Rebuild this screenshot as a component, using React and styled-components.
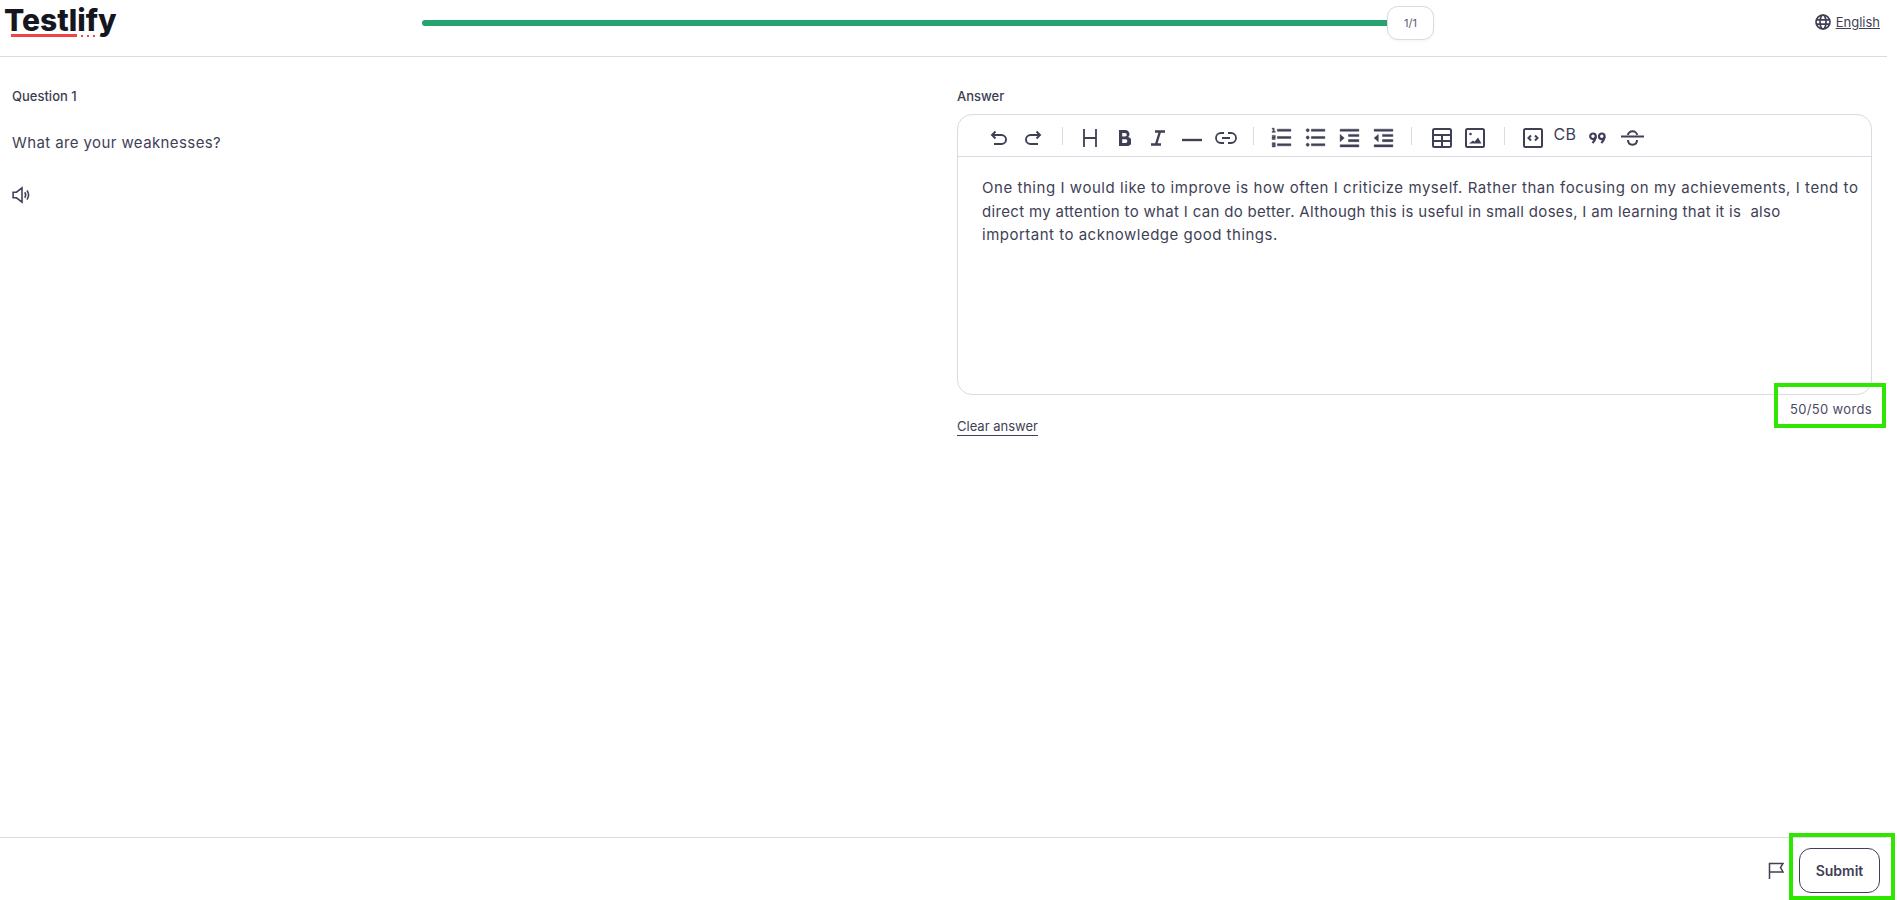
import React from 'react';
import styled, { createGlobalStyle } from 'styled-components';
import {
  RiListOrdered,
  RiListUnordered,
  RiIndentIncrease,
  RiIndentDecrease,
} from 'react-icons/ri';

const ink = '#3f3f56';
const line = '#d9dae3';

const GlobalStyle = createGlobalStyle`
  html, body { margin: 0; padding: 0; background: #fff; }
  body { font-family: Inter, "Open Sans", sans-serif; color: ${ink}; overflow: hidden; }
`;

const Page = styled.div`
  height: 900px;
  display: flex;
  flex-direction: column;
  padding-right: 10px;
  box-sizing: border-box;
`;

const Header = styled.header`
  height: 57px;
  flex: none;
  box-sizing: border-box;
  border-bottom: 1px solid ${line};
  display: flex;
  align-items: flex-start;
`;

const Logo = styled.div`
  width: 422px;
  flex: none;
  padding: 0 0 0 4px;
  box-sizing: border-box;
  position: relative;
  font-size: 30px;
  line-height: 40px;
  font-weight: 800;
  letter-spacing: 0px;
  color: #14171f;
`;

const LogoLine = styled.span`
  position: absolute;
  left: 11px;
  top: 34px;
  width: 66px;
  height: 3px;
  background: #f0444b;
`;

const LogoDots = styled.span`
  position: absolute;
  left: 81px;
  top: 35px;
  display: flex;
  gap: 4px;
  i {
    width: 2px;
    height: 2px;
    background: #f0444b;
    display: block;
  }
`;

const ProgressWrap = styled.div`
  width: 1012px;
  flex: none;
  display: flex;
  align-items: center;
  height: 34px;
  margin-top: 6px;
`;

const ProgressBar = styled.div`
  width: 965px;
  height: 6px;
  background: #27a36f;
  border-radius: 3px 0 0 3px;
`;

const Count = styled.div`
  width: 47px;
  height: 34px;
  box-sizing: border-box;
  border: 1px solid ${line};
  border-radius: 11px;
  background: #fff;
  font-size: 11px;
  color: #5a5a72;
  display: flex;
  align-items: center;
  justify-content: center;
  box-shadow: 0 1px 3px rgba(60, 60, 90, 0.06);
`;

const Language = styled.div`
  margin-left: auto;
  margin-top: 14px;
  margin-right: 7px;
  display: flex;
  align-items: center;
  gap: 5px;
  font-size: 13px;
  a { color: ${ink}; text-decoration: underline; }
`;

const Main = styled.main`
  flex: 1;
  display: grid;
  grid-template-columns: 957px 915px;
  align-content: start;
`;

const QuestionCol = styled.section`
  padding: 30px 0 0 12px;
`;

const Label = styled.div`
  font-size: 13px;
  line-height: 18px;
  font-weight: 450;
  color: #3d3d52;
`;

const QuestionText = styled.p`
  margin: 27px 0 0;
  font-size: 15px;
  line-height: 22px;
  letter-spacing: 0.4px;
`;

const Speaker = styled.svg`
  display: block;
  margin-top: 31px;
  width: 20px;
  height: 20px;
`;

const AnswerCol = styled.section`
  padding-top: 30px;
  position: relative;
`;

const Editor = styled.div`
  margin-top: 9px;
  height: 281px;
  box-sizing: border-box;
  border: 1px solid ${line};
  border-radius: 15px;
`;

const Toolbar = styled.div`
  height: 42px;
  box-sizing: border-box;
  border-bottom: 1px solid ${line};
  display: flex;
  align-items: center;
  padding: 4px 0 0 30px;
`;

const Tool = styled.span`
  width: 22px;
  height: 22px;
  margin-right: ${(p) => p.$gap ?? 12}px;
  display: flex;
  align-items: center;
  justify-content: center;
  font-size: 25px;
  color: ${ink};
  flex: none;
  svg { flex: none; }
`;

const HeavyTool = styled(Tool)`
  svg { stroke: currentColor; stroke-width: 0.45; }
`;

const ToolText = styled.span`
  font-size: 16px;
  letter-spacing: 0.4px;
  color: ${ink};
  width: 26px;
  margin-right: 8px;
  margin-top: -7px;
  text-align: center;
  flex: none;
`;

const Divider = styled.span`
  width: 1px;
  height: 18px;
  background: ${line};
  flex: none;
  margin-top: -3px;
  margin-right: ${(p) => p.$gap ?? 17}px;
`;

const Body = styled.div`
  padding: 19px 10px 0 24px;
  font-size: 15px;
  line-height: 23.5px;
  white-space: nowrap;
`;

const BodyLine = styled.div`
  letter-spacing: ${(p) => p.$spacing}px;
`;

const WordCount = styled.div`
  margin-top: 5px;
  text-align: right;
  font-size: 13px;
  letter-spacing: 0.35px;
  line-height: 18px;
  color: #4a4a62;
`;

const Clear = styled.a`
  display: block;
  width: fit-content;
  margin-top: 0;
  font-size: 13px;
  line-height: 17px;
  color: ${ink};
  border-bottom: 1px solid ${ink};
`;

const Highlight = styled.div`
  position: absolute;
  box-sizing: border-box;
  border: 4px solid #2ee600;
  pointer-events: none;
`;

const WordHighlight = styled(Highlight)`
  left: 817px;
  top: 326px;
  width: 112px;
  height: 45px;
`;

const Footer = styled.footer`
  height: 63px;
  flex: none;
  box-sizing: border-box;
  border-top: 1px solid ${line};
  display: flex;
  align-items: flex-start;
  justify-content: flex-end;
  gap: 15px;
  padding: 10px 7px 0 0;
  position: relative;
`;

const Flag = styled.svg`
  width: 16px;
  height: 17px;
  margin-top: 14px;
`;

const Submit = styled.button`
  width: 81px;
  height: 45px;
  background: #fff;
  border: 1px solid ${ink};
  border-radius: 12px;
  font: 600 14px Inter, sans-serif;
  color: ${ink};
`;

const SubmitHighlight = styled(Highlight)`
  right: -8px;
  top: -5px;
  width: 106px;
  height: 67px;
`;

// toolbar drawings: the editor's icons are heavier than the stock sets
const Draw = ({ w, h, sw = 1.9, fill = 'none', children }) => (
  <svg width={w} height={h} viewBox={`0 0 ${w} ${h}`} fill={fill} stroke={fill === 'none' ? ink : 'none'} strokeWidth={sw}>
    {children}
  </svg>
);

const Undo = () => (
  <Draw w={18} h={16}>
    <path d="M5.500 1.500 2 5l3.500 3.500M2 5h9.500a4.500 4.500 0 0 1 0 9H4" />
  </Draw>
);

const Redo = () => (
  <Draw w={18} h={16}>
    <path d="M12.500 1.500 16 5l-3.500 3.500M16 5H6.500a4.500 4.500 0 0 0 0 9H14" />
  </Draw>
);

const HeadingMark = () => (
  <Draw w={14} h={18} sw={1.8}>
    <path d="M1 0v18M13 0v18M1 9h12" />
  </Draw>
);

const BoldMark = () => (
  <Draw w={13} h={16} fill={ink}>
    <path
      fillRule="evenodd"
      d="M1 0h6.200a4 4 0 0 1 3 6.900A4.400 4.400 0 0 1 7.700 16H1zM4.200 3v3.400h2.900a1.700 1.700 0 0 0 0-3.400zM4.200 9.200V13h3.300a1.900 1.900 0 0 0 0-3.800z"
    />
  </Draw>
);

const ItalicMark = () => (
  <Draw w={16} h={16} sw={2.4}>
    <path d="M5 1.500h10M1 14.500h10M10 1.500 6 14.500" />
  </Draw>
);

const RuleMark = () => (
  <Draw w={20} h={12} sw={2.4}>
    <path d="M0 8h20" />
  </Draw>
);

const LinkMark = () => (
  <Draw w={22} h={12} sw={1.8}>
    <path d="M9 1H6a5 5 0 0 0 0 10h3M13 1h3a5 5 0 0 1 0 10h-3M7 6h8" />
  </Draw>
);

const TableMark = () => (
  <Draw w={20} h={20} sw={2}>
    <rect x="1" y="1" width="18" height="18" rx="1.500" />
    <path d="M1 7h18M1 13h18M10 7v12" />
  </Draw>
);

const ImageMark = () => (
  <Draw w={20} h={20} sw={2}>
    <rect x="1" y="1" width="18" height="18" rx="1.500" />
    <circle cx="5.500" cy="6" r="1.300" fill={ink} stroke="none" />
    <path d="M4 15.500l4-3 1.500 1.200L13 9.500l3.500 6z" fill={ink} stroke="none" />
  </Draw>
);

const CodeMark = () => (
  <Draw w={20} h={20} sw={2}>
    <rect x="1" y="1" width="18" height="18" rx="1.500" />
    <path d="M8 7.500 5.500 10 8 12.500M12 7.500l2.500 2.500-2.500 2.500" />
  </Draw>
);

const QuoteMark = () => (
  <Draw w={17} h={12} sw={2.2}>
    <circle cx="4" cy="4.300" r="2.800" />
    <circle cx="12.800" cy="4.300" r="2.800" />
    <path d="M6.700 5c-.4 2.500-1.600 4.500-3.200 6M15.500 5c-.4 2.500-1.600 4.500-3.200 6" />
  </Draw>
);

const StrikeMark = () => (
  <Draw w={23} h={16} sw={2}>
    <path d="M0 6.500h23M7 5c0-2 2-3.700 4.500-3.700S16 3 16 5M7 10c0 3 2 4.700 4.500 4.700S16 13 16 10" />
  </Draw>
);

export default function App() {
  return (
    <>
      <GlobalStyle />
      <Page>
        <Header>
          <Logo>
            Testlify
            <LogoLine />
            <LogoDots>
              <i />
              <i />
              <i />
            </LogoDots>
          </Logo>
          <ProgressWrap>
            <ProgressBar />
            <Count>1/1</Count>
          </ProgressWrap>
          <Language>
            <svg width="16" height="16" viewBox="0 0 16 16" fill="none" stroke={ink} strokeWidth="1.7">
              <circle cx="8" cy="8" r="7" />
              <ellipse cx="8" cy="8" rx="3" ry="7" />
              <path d="M1 5.800h14M1 10.200h14" />
            </svg>
            <a href="#lang">English</a>
          </Language>
        </Header>
        <Main>
          <QuestionCol>
            <Label>Question 1</Label>
            <QuestionText>What are your weaknesses?</QuestionText>
            <Speaker viewBox="0 0 18 18" fill="none" stroke={ink} strokeWidth="1.4">
              <path d="M1 6.500h3L9 2.500v13l-5-4H1zM11.500 6.500c1 1.500 1 3.500 0 5M13.500 5c1.800 2.500 1.800 5.500 0 8" />
            </Speaker>
          </QuestionCol>
          <AnswerCol>
            <Label>Answer</Label>
            <Editor>
              <Toolbar>
                <Tool><Undo /></Tool>
                <Tool $gap={18}><Redo /></Tool>
                <Divider $gap={16} />
                <Tool><HeadingMark /></Tool>
                <Tool><BoldMark /></Tool>
                <Tool><ItalicMark /></Tool>
                <Tool><RuleMark /></Tool>
                <Tool $gap={16}><LinkMark /></Tool>
                <Divider $gap={16} />
                <HeavyTool><RiListOrdered /></HeavyTool>
                <HeavyTool><RiListUnordered /></HeavyTool>
                <HeavyTool><RiIndentIncrease /></HeavyTool>
                <HeavyTool $gap={17}><RiIndentDecrease /></HeavyTool>
                <Divider $gap={19} />
                <Tool $gap={11}><TableMark /></Tool>
                <Tool $gap={18}><ImageMark /></Tool>
                <Divider $gap={17} />
                <Tool $gap={8}><CodeMark /></Tool>
                <ToolText>CB</ToolText>
                <Tool $gap={13}><QuoteMark /></Tool>
                <Tool><StrikeMark /></Tool>
              </Toolbar>
              <Body>
                <BodyLine $spacing={0.55}>One thing I would like to improve is how often I criticize myself. Rather than focusing on my achievements, I tend to</BodyLine>
                <BodyLine $spacing={0.32}>direct my attention to what I can do better. Although this is useful in small doses, I am learning that it is&nbsp; also</BodyLine>
                <BodyLine $spacing={0.5}>important to acknowledge good things.</BodyLine>
              </Body>
            </Editor>
            <WordCount>50/50 words</WordCount>
            <Clear>Clear answer</Clear>
            <WordHighlight />
          </AnswerCol>
        </Main>
        <Footer>
          <Flag viewBox="0 0 16 17" fill="none" stroke={ink} strokeWidth="1.5">
            <path d="M1.500 17V1.500H15l-2.500 4 2.500 4.500H1.500" />
          </Flag>
          <Submit>Submit</Submit>
          <SubmitHighlight />
        </Footer>
      </Page>
    </>
  );
}
